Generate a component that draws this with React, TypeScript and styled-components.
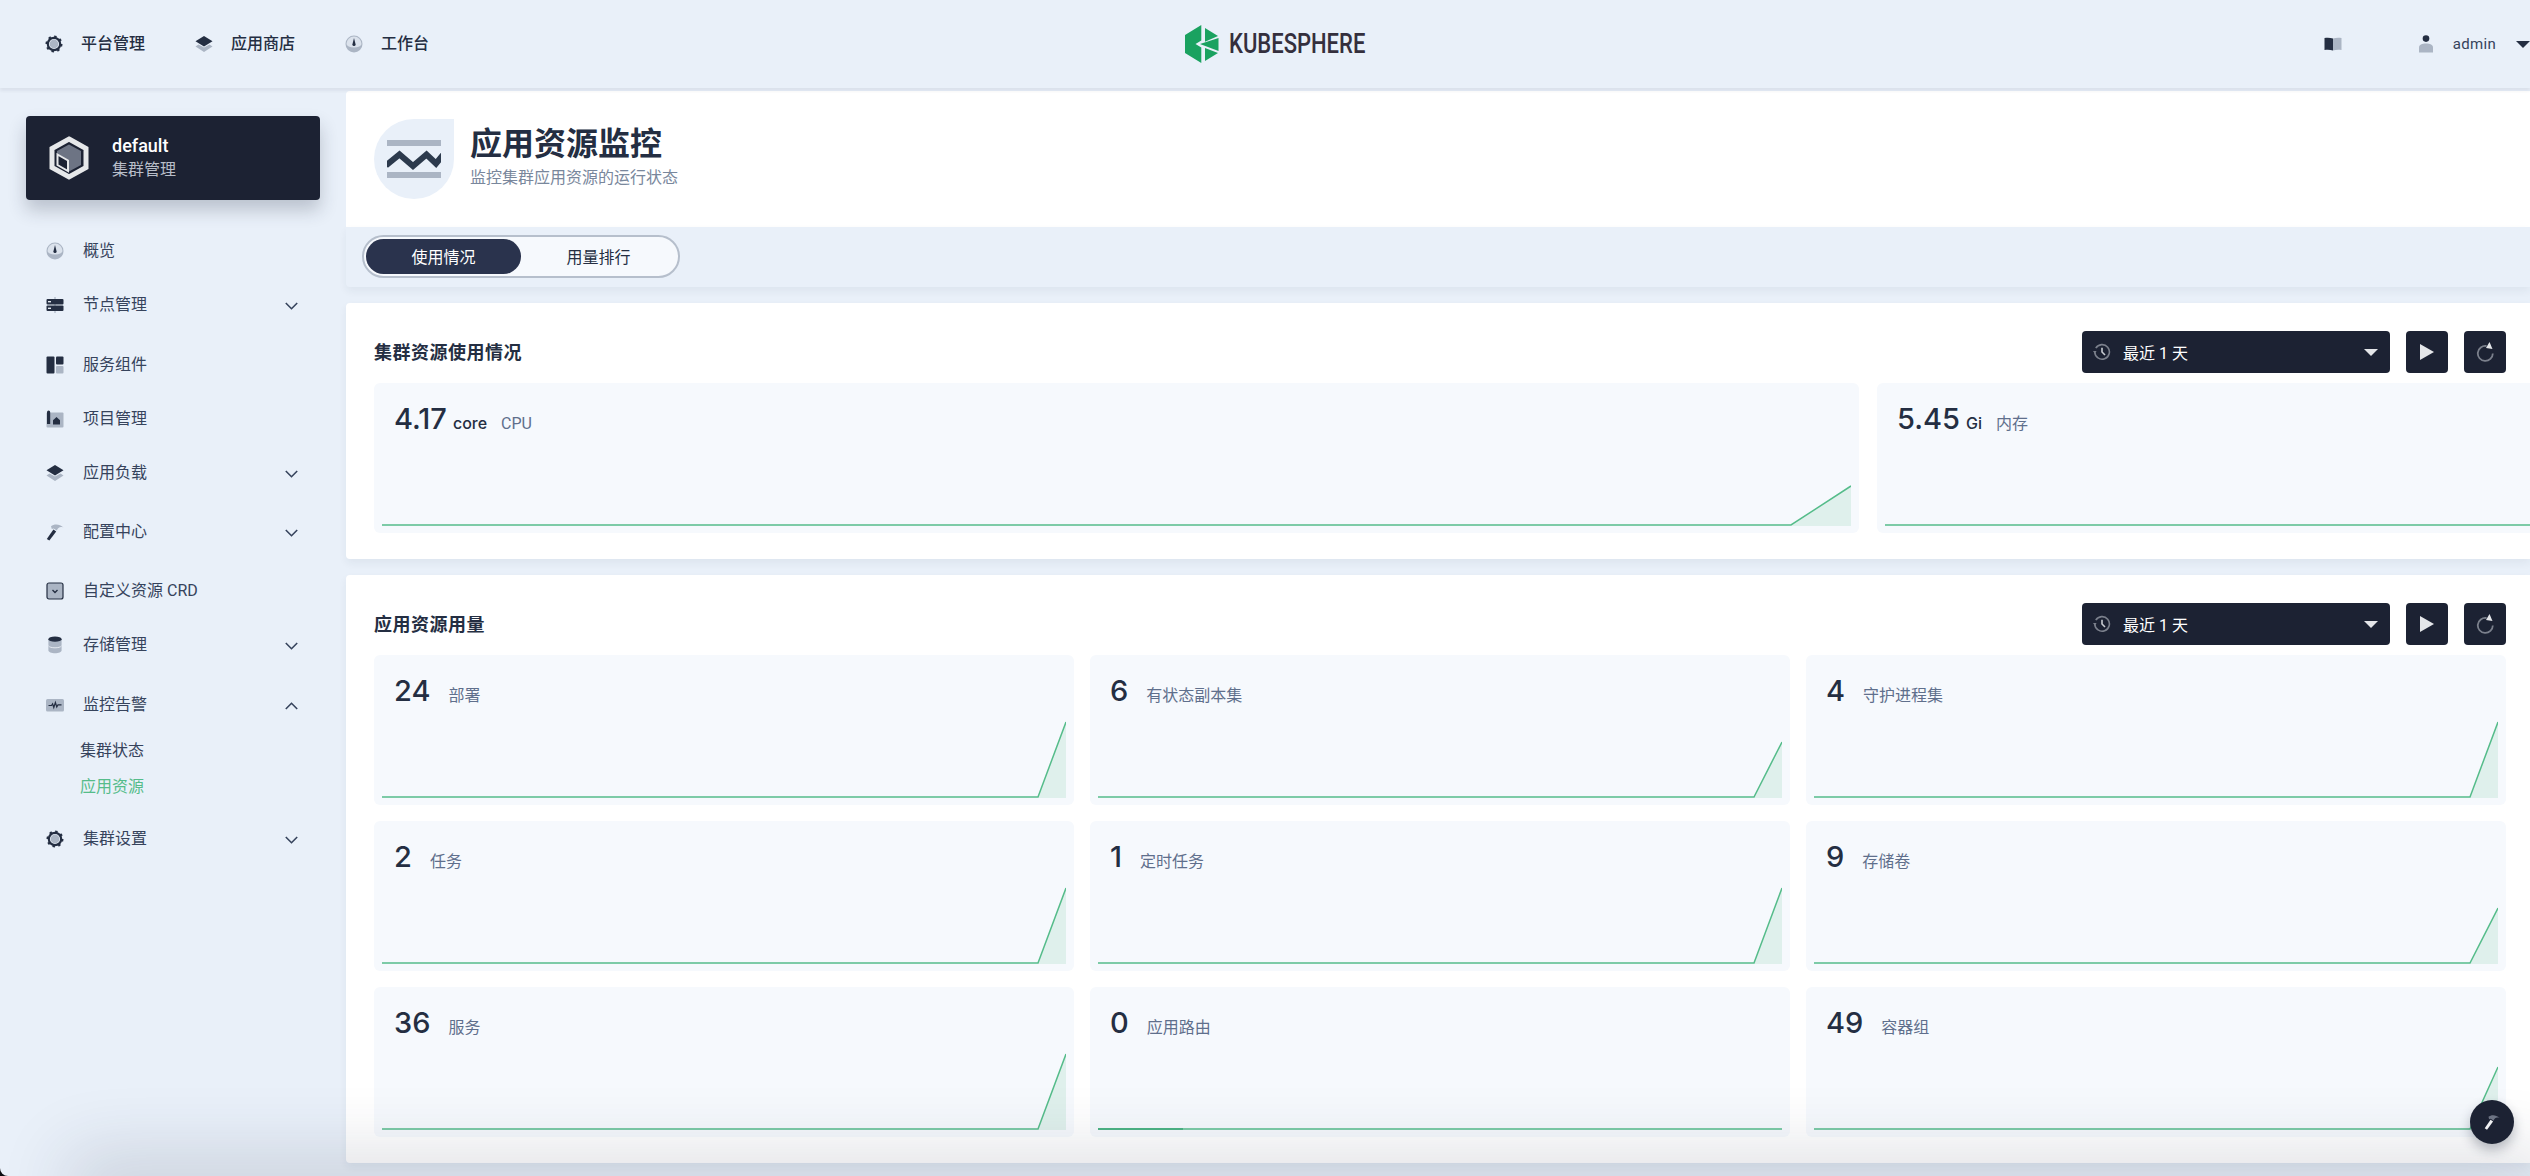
import React, { FC } from "react";
import styled, { createGlobalStyle } from "styled-components";

const DARK = "#1c2233";
const INK = "#242e42";
const SLATE = "#36435c";
const LIGHT = "#abb5c4";
const PAGE = "#e9f0f9";
const CARD = "#f6f9fd";
const GREEN = "#55bc8a";

const GlobalStyle = createGlobalStyle`
  html, body {
    margin: 0;
    padding: 0;
    background: #0b0d12;
    overflow: hidden;
  }
  * { box-sizing: border-box; }
`;

type IconProps = { size?: number };

const GaugeIcon: FC<IconProps> = ({ size = 18 }) => (
  <svg width={size} height={size} viewBox="0 0 18 18">
    <circle cx="9" cy="9" r="8.5" fill={LIGHT} />
    <path d="M1.500 9a7.500 7.500 0 0 1 15 0 7.500 3.500 0 0 1-15 0z" fill="#dbe2ec" />
    <path d="M9 3 10.600 9.500a1.600 1.600 0 1 1-3.200 0z" fill={INK} />
  </svg>
);

const GearIcon: FC<IconProps> = ({ size = 18 }) => (
  <svg width={size} height={size} viewBox="0 0 18 18">
    <circle cx="9" cy="9" r="6.200" fill="none" stroke={INK} strokeWidth="2.200" />
    <circle cx="9" cy="9" r="4.400" fill={LIGHT} />
    <circle cx="9" cy="9" r="7.400" fill="none" stroke={INK} strokeWidth="2.200" strokeDasharray="2.400 3.400" />
  </svg>
);

const LayersIcon: FC<IconProps> = ({ size = 18 }) => (
  <svg width={size} height={size} viewBox="0 0 18 18">
    <path d="M0.500 11.500 3.500 9.500 9 12.600 14.500 9.500 17.500 11.500 9 17z" fill={LIGHT} />
    <path d="M9 1 17.500 6.200 9 11.400 0.500 6.200z" fill={INK} />
  </svg>
);

const NodesIcon: FC<IconProps> = ({ size = 18 }) => (
  <svg width={size} height={size} viewBox="0 0 18 18">
    <rect x="8.400" y="1" width="1.200" height="16" fill={LIGHT} />
    <rect x="0.500" y="3" width="17" height="5.400" rx="1" fill={INK} />
    <rect x="0.500" y="9.600" width="17" height="5.400" rx="1" fill={INK} />
    <rect x="2" y="5" width="3" height="1.400" fill="#e4e9f0" />
    <rect x="2" y="11.600" width="3" height="1.400" fill="#e4e9f0" />
  </svg>
);

const ComponentsIcon: FC<IconProps> = ({ size = 18 }) => (
  <svg width={size} height={size} viewBox="0 0 18 18">
    <rect x="0.500" y="0.500" width="8" height="17" rx="1" fill={INK} />
    <rect x="10" y="0.500" width="7.500" height="8" rx="1" fill={INK} />
    <rect x="10" y="10" width="7.500" height="7.500" rx="1" fill={LIGHT} />
  </svg>
);

const ProjectIcon: FC<IconProps> = ({ size = 18 }) => (
  <svg width={size} height={size} viewBox="0 0 18 18">
    <rect x="0.500" y="2.500" width="17" height="15" rx="1" fill={LIGHT} />
    <path d="M1 2.200a1.600 1.600 0 0 1 3.200 0V14H1z" fill={INK} />
    <path d="M7 10.200 10.500 7 14 10.200V14.500H7z" fill={INK} />
  </svg>
);

const HammerIcon: FC<IconProps & { head?: string; handle?: string }> = ({
  size = 18,
  head = LIGHT,
  handle = INK,
}) => (
  <svg width={size} height={size} viewBox="0 0 18 18">
    <path d="M5 3.200C8 .8 13.500 .6 17.500 4.500 14 3.400 12 4.400 10.800 7.600L7.600 5.400 5.800 6z" fill={head} />
    <path d="M7.400 6.400 10.200 8.400 3.400 17.600 .8 16z" fill={handle} />
  </svg>
);

const CrdIcon: FC<IconProps> = ({ size = 18 }) => (
  <svg width={size} height={size} viewBox="0 0 18 18">
    <rect x="1" y="1" width="16" height="16" rx="2" fill={LIGHT} stroke={INK} strokeWidth="1.200" />
    <path d="M6.500 8 9 10.500 11.500 8" fill="none" stroke={INK} strokeWidth="1.400" />
  </svg>
);

const DatabaseIcon: FC<IconProps> = ({ size = 18 }) => (
  <svg width={size} height={size} viewBox="0 0 18 18">
    <path d="M2.400 3.500v11c0 1.600 3 2.800 6.600 2.800s6.600-1.200 6.600-2.800v-11z" fill={LIGHT} />
    <ellipse cx="9" cy="3.200" rx="6.600" ry="2.600" fill={INK} />
    <path d="M2.400 9.800c1 1.400 3.600 2 6.600 2s5.600-.6 6.600-2" fill="none" stroke="#e4e9f0" strokeWidth="1" />
  </svg>
);

const MonitorIcon: FC<IconProps> = ({ size = 18 }) => (
  <svg width={size} height={size} viewBox="0 0 18 18">
    <rect x="0" y="3" width="18" height="12.500" rx="1.500" fill={LIGHT} />
    <path d="M2.500 9.500H5.500L6.600 7.800 7.800 11.500 9.400 6.500 10.800 11 12 8.800H15.500" fill="none" stroke={INK} strokeWidth="1.200" />
  </svg>
);

const BookIcon: FC = () => (
  <svg width="18" height="14" viewBox="0 0 18 14">
    <path d="M0.500 1C3.500 0.500 6.500 0.700 9 1.500V13.500C6.500 12.700 3.500 12.500 0.500 13z" fill={INK} />
    <path d="M9 1.500C11.500 0.700 14.500 0.500 17.500 1V13C14.500 12.500 11.500 12.700 9 13.500z" fill={LIGHT} />
  </svg>
);

const UserIcon: FC = () => (
  <svg width="14" height="18" viewBox="0 0 14 18">
    <circle cx="7" cy="3.600" r="3.300" fill={INK} />
    <path d="M0 17.500V12.500C0 9.800 3 8.500 7 8.500S14 9.800 14 12.500V17.500z" fill={LIGHT} />
  </svg>
);

const HexLogo: FC = () => (
  <svg width="34" height="38" viewBox="0 0 34 38">
    <path d="M0 10 16.300 0V15.500L10.500 19 16.300 22.500V38L0 28z" fill="#1aa260" />
    <path d="M20 3 33 11 20 16.800z" fill="#1aa260" />
    <path d="M15 19 33.500 13V26z" fill="#1aa260" />
    <path d="M20 23 33 28 20 36z" fill="#1aa260" />
  </svg>
);

const ClusterIcon: FC = () => (
  <svg width="42" height="44" viewBox="0 0 42 44">
    <path d="M21 3 38 12.500V31.500L21 41 4 31.500V12.500z" fill="none" stroke="#e6e8ea" strokeWidth="5" />
    <path d="M21 8.500 33 15V29L21 35.500 9 29V15z" fill="#6d7484" />
    <path d="M9.500 18.500 20 24.500V35L9.500 29z" fill={DARK} stroke="#e6e8ea" strokeWidth="2" />
  </svg>
);

const HeadIconArt: FC = () => (
  <svg width="54" height="38" viewBox="0 0 54 38">
    <rect width="54" height="6" fill={LIGHT} />
    <rect y="32" width="54" height="6" fill={LIGHT} />
    <path d="M-1 25.500 12.500 14.500 26 26 39.500 14.500 49 23.500 56 15" fill="none" stroke="#2c3a4d" strokeWidth="6" />
  </svg>
);

const HistoryIcon: FC = () => (
  <svg width="18" height="18" viewBox="0 0 18 18">
    <path d="M2.800 5.200A7.300 7.300 0 1 1 1.800 9" fill="none" stroke="#7b808c" strokeWidth="1.600" />
    <path d="M0 8 3.600 8 1.800 10.600z" fill="#7b808c" />
    <path d="M9 4.800V9L12 12" fill="none" stroke="#c9cdd3" strokeWidth="1.600" />
  </svg>
);

const RefreshIcon: FC = () => (
  <svg width="18" height="20" viewBox="0 0 18 20">
    <path d="M10.500 4A7.500 7.500 0 1 0 16.800 11.500" fill="none" stroke="#7b808c" strokeWidth="1.800" />
    <path d="M13.500 0 16.500 7 10 6z" fill="#e4e6e9" />
  </svg>
);

const Chevron: FC<{ up?: boolean }> = ({ up }) => (
  <svg width="13" height="8" viewBox="0 0 13 8">
    <path d={up ? "M.8 7 6.500 1.300 12.200 7" : "M.8 1 6.500 6.700 12.200 1"} fill="none" stroke={SLATE} strokeWidth="1.600" />
  </svg>
);

interface SparkProps {
  width: number;
  start?: number;
  rise?: number;
}

const Sparkline: FC<SparkProps> = ({ width, start, rise }) => {
  const base = 84;
  if (start === undefined || rise === undefined) {
    return (
      <ChartSvg width={width} height={86} viewBox={`0 0 ${width} 86`}>
        <line x1="0" x2={width} y1={base} y2={base} stroke={GREEN} strokeWidth="1.500" />
        <line x1="0" x2="85" y1={base} y2={base} stroke="#3cab78" strokeWidth="1.500" />
      </ChartSvg>
    );
  }
  const line = `0,${base} ${start},${base} ${width},${base - rise}`;
  return (
    <ChartSvg width={width} height={86} viewBox={`0 0 ${width} 86`}>
      <polygon points={`${start},${base + 1} ${width},${base - rise} ${width},${base + 1}`} fill="rgba(85,188,138,0.14)" />
      <polyline points={line} fill="none" stroke={GREEN} strokeWidth="1.500" />
    </ChartSvg>
  );
};

const navItems = [
  { label: "平台管理", icon: <GearIcon />, width: 150 },
  { label: "应用商店", icon: <LayersIcon />, width: 150 },
  { label: "工作台", icon: <GaugeIcon />, width: 100 },
];

const menu = [
  { label: "概览", icon: <GaugeIcon />, h: 54 },
  { label: "节点管理", icon: <NodesIcon />, h: 60, more: true },
  { label: "服务组件", icon: <ComponentsIcon />, h: 54 },
  { label: "项目管理", icon: <ProjectIcon />, h: 54 },
  { label: "应用负载", icon: <LayersIcon />, h: 59, more: true },
  { label: "配置中心", icon: <HammerIcon />, h: 59, more: true },
  { label: "自定义资源 CRD", icon: <CrdIcon />, h: 54 },
  { label: "存储管理", icon: <DatabaseIcon />, h: 60, more: true },
  { label: "监控告警", icon: <MonitorIcon />, h: 46, more: true, open: true },
];

const usage = [
  { value: "24", label: "部署", rise: 75 },
  { value: "6", label: "有状态副本集", rise: 55 },
  { value: "4", label: "守护进程集", rise: 75 },
  { value: "2", label: "任务", rise: 75 },
  { value: "1", label: "定时任务", rise: 75 },
  { value: "9", label: "存储卷", rise: 55 },
  { value: "36", label: "服务", rise: 75 },
  { value: "0", label: "应用路由" },
  { value: "49", label: "容器组", rise: 62 },
];

const TimeControls: FC = () => (
  <Controls>
    <TimeSelect>
      <HistoryIcon />
      <TimeText>最近 1 天</TimeText>
      <Caret $color="#e4e6e9" />
    </TimeSelect>
    <SquareButton>
      <PlayShape />
    </SquareButton>
    <SquareButton>
      <RefreshIcon />
    </SquareButton>
  </Controls>
);

const App: FC = () => (
  <Page>
    <GlobalStyle />
    <Header>
      <TopNav>
        {navItems.map((item) => (
          <TopNavItem key={item.label} $width={item.width}>
            {item.icon}
            <span>{item.label}</span>
          </TopNavItem>
        ))}
      </TopNav>
      <Logo>
        <HexLogo />
        <LogoText>KUBESPHERE</LogoText>
      </Logo>
      <UserArea>
        <BookIcon />
        <UserName>
          <UserIcon />
          <span>admin</span>
        </UserName>
        <Caret $color={INK} />
      </UserArea>
    </Header>

    <Body>
      <Sidebar>
        <ClusterCard>
          <ClusterIcon />
          <div>
            <ClusterName>default</ClusterName>
            <ClusterSub>集群管理</ClusterSub>
          </div>
        </ClusterCard>
        <Menu>
          {menu.map((item) => (
            <MenuRow key={item.label} $h={item.h}>
              <MenuIcon>{item.icon}</MenuIcon>
              <MenuLabel>{item.label}</MenuLabel>
              {item.more && <Chevron up={item.open} />}
            </MenuRow>
          ))}
          <SubRow $h={36}>集群状态</SubRow>
          <SubRow $h={52} $active>
            应用资源
          </SubRow>
          <MenuRow $h={40}>
            <MenuIcon>
              <GearIcon />
            </MenuIcon>
            <MenuLabel>集群设置</MenuLabel>
            <Chevron />
          </MenuRow>
        </Menu>
      </Sidebar>

      <Main>
        <PageHead>
          <HeadIcon>
            <HeadIconArt />
          </HeadIcon>
          <HeadText>
            <PageTitle>应用资源监控</PageTitle>
            <PageDesc>监控集群应用资源的运行状态</PageDesc>
          </HeadText>
        </PageHead>

        <TabBar>
          <Tabs>
            <Tab $active>使用情况</Tab>
            <Tab>用量排行</Tab>
          </Tabs>
        </TabBar>

        <Panel>
          <PanelHead>
            <PanelTitle>集群资源使用情况</PanelTitle>
            <TimeControls />
          </PanelHead>
          <WideCards>
            <MetricCard>
              <MetricHead>
                <MetricValue>4.17</MetricValue>
                <MetricUnit>core</MetricUnit>
                <MetricLabel>CPU</MetricLabel>
              </MetricHead>
              <Sparkline width={1469} start={1409} rise={39} />
            </MetricCard>
            <MetricCard>
              <MetricHead>
                <MetricValue>5.45</MetricValue>
                <MetricUnit>Gi</MetricUnit>
                <MetricLabel>内存</MetricLabel>
              </MetricHead>
              <Sparkline width={1469} start={1409} rise={39} />
            </MetricCard>
          </WideCards>
        </Panel>

        <Panel>
          <PanelHead>
            <PanelTitle>应用资源用量</PanelTitle>
            <TimeControls />
          </PanelHead>
          <UsageGrid>
            {usage.map((item) => (
              <MetricCard key={item.label}>
                <MetricHead>
                  <MetricValue>{item.value}</MetricValue>
                  <MetricLabel $wide>{item.label}</MetricLabel>
                </MetricHead>
                <Sparkline width={684} start={item.rise ? 656 : undefined} rise={item.rise} />
              </MetricCard>
            ))}
          </UsageGrid>
        </Panel>
      </Main>
    </Body>

    <BottomShade />
    <Fab>
      <HammerIcon size={16} head="#6d7484" handle="#f0f1f3" />
    </Fab>
  </Page>
);

const Page = styled.div`
  position: relative;
  width: 100vw;
  height: 100vh;
  overflow: hidden;
  background: ${PAGE};
  border-bottom-left-radius: 8px;
  color: ${INK};
  font-family: Roboto, "Noto Sans CJK SC", sans-serif;
  font-size: 16px;
`;

const Header = styled.header`
  position: relative;
  z-index: 2;
  display: grid;
  grid-template-columns: 1185px auto 1fr;
  align-items: center;
  height: 88px;
  background: ${PAGE};
  box-shadow: 0 3px 3px rgba(36, 46, 66, 0.07);
`;

const TopNav = styled.nav`
  display: flex;
  padding-left: 45px;
`;

const TopNavItem = styled.div<{ $width: number }>`
  display: flex;
  align-items: center;
  gap: 18px;
  width: ${(p) => p.$width}px;
  font-weight: 500;
  line-height: 24px;
`;

const Logo = styled.div`
  display: flex;
  align-items: center;
  gap: 10px;
`;

const LogoText = styled.span`
  display: inline-block;
  width: 136px;
  font-family: Roboto, sans-serif;
  font-size: 27px;
  font-weight: 500;
  line-height: 30px;
  color: #342f3d;
  transform: scaleX(0.815);
  transform-origin: left center;
  white-space: nowrap;
`;

const UserArea = styled.div`
  display: flex;
  align-items: center;
  justify-content: flex-end;
`;

const UserName = styled.div`
  display: flex;
  align-items: center;
  gap: 20px;
  margin-left: 77px;
  margin-right: 20px;
  font-size: 15px;
  color: ${SLATE};
  letter-spacing: 0.3px;
`;

const Caret = styled.i<{ $color: string }>`
  display: block;
  width: 0;
  height: 0;
  border-left: 7px solid transparent;
  border-right: 7px solid transparent;
  border-top: 7px solid ${(p) => p.$color};
`;

const Body = styled.div`
  display: flex;
  height: calc(100% - 88px);
`;

const Sidebar = styled.aside`
  flex: 0 0 346px;
  padding: 28px 26px 0;
`;

const ClusterCard = styled.div`
  display: flex;
  align-items: center;
  gap: 22px;
  width: 294px;
  height: 84px;
  padding-left: 22px;
  background: ${DARK};
  border-radius: 4px;
  box-shadow: 0 10px 18px rgba(36, 46, 66, 0.24);
`;

const ClusterName = styled.div`
  font-size: 18px;
  font-weight: 500;
  line-height: 24px;
  color: #fff;
`;

const ClusterSub = styled.div`
  font-size: 16px;
  line-height: 24px;
  color: #b8bec9;
`;

const Menu = styled.div`
  margin-top: 41px;
`;

const MenuRow = styled.div<{ $h: number }>`
  display: flex;
  align-items: flex-start;
  height: ${(p) => p.$h}px;
  padding-right: 22px;
  svg:last-child:not(:only-child) {
    margin-top: 7px;
  }
`;

const MenuIcon = styled.span`
  display: flex;
  flex: 0 0 37px;
  height: 20px;
  padding-left: 20px;
  align-items: center;
`;

const MenuLabel = styled.span`
  flex: 1;
  padding-left: 19px;
  font-size: 16px;
  line-height: 20px;
  color: ${SLATE};
  white-space: nowrap;
`;

const SubRow = styled.div<{ $h: number; $active?: boolean }>`
  height: ${(p) => p.$h}px;
  padding-left: 54px;
  font-size: 16px;
  line-height: 20px;
  color: ${(p) => (p.$active ? GREEN : SLATE)};
`;

const Main = styled.main`
  flex: 1;
  min-width: 0;
  height: 1072px;
  margin-top: 3px;
`;

const PageHead = styled.div`
  display: flex;
  align-items: center;
  gap: 16px;
  height: 136px;
  padding-left: 28px;
  background: #fff;
  border-top-left-radius: 4px;
`;

const HeadText = styled.div`
  margin-top: -6px;
`;

const HeadIcon = styled.div`
  display: flex;
  align-items: center;
  justify-content: center;
  width: 80px;
  height: 80px;
  background: ${PAGE};
  border-radius: 50% 0 50% 50%;
`;

const PageTitle = styled.h1`
  margin: 0;
  font-size: 32px;
  font-weight: 700;
  line-height: 44px;
  color: ${INK};
`;

const PageDesc = styled.p`
  margin: 0;
  font-size: 16px;
  line-height: 24px;
  color: #79879c;
`;

const TabBar = styled.div`
  height: 60px;
  padding: 8px 0 0 16px;
  background: ${PAGE};
  border-bottom-left-radius: 4px;
  box-shadow: 0 4px 8px rgba(36, 46, 66, 0.06);
`;

const Tabs = styled.div`
  display: flex;
  width: 318px;
  height: 43px;
  padding: 2px;
  background: ${CARD};
  border: 2px solid #b6bfcc;
  border-radius: 22px;
`;

const Tab = styled.div<{ $active?: boolean }>`
  flex: 1;
  text-align: center;
  font-size: 16px;
  line-height: 37px;
  border-radius: 19px;
  color: ${(p) => (p.$active ? "#fff" : INK)};
  background: ${(p) => (p.$active ? "#2a334d" : "transparent")};
`;

const Panel = styled.section`
  margin-top: 16px;
  padding: 28px 24px 26px 28px;
  background: #fff;
  border-radius: 4px 0 0 4px;
  overflow: hidden;
  box-shadow: 0 4px 8px rgba(36, 46, 66, 0.06);
`;

const PanelHead = styled.div`
  display: flex;
  align-items: center;
  justify-content: space-between;
  height: 42px;
  margin-bottom: 10px;
`;

const PanelTitle = styled.h2`
  margin: -2px 0 0;
  font-size: 18px;
  font-weight: 700;
  letter-spacing: 0.5px;
  color: ${INK};
`;

const Controls = styled.div`
  display: flex;
  gap: 16px;
`;

const TimeSelect = styled.div`
  display: flex;
  align-items: center;
  width: 308px;
  height: 42px;
  padding: 0 12px 0 11px;
  background: ${DARK};
  border-radius: 4px;
`;

const TimeText = styled.span`
  flex: 1;
  padding-left: 12px;
  font-size: 16px;
  color: #fff;
`;

const SquareButton = styled.div`
  display: flex;
  align-items: center;
  justify-content: center;
  width: 42px;
  height: 42px;
  background: ${DARK};
  border-radius: 4px;
`;

const PlayShape = styled.i`
  display: block;
  width: 0;
  height: 0;
  border-left: 14px solid #e4e6e9;
  border-top: 8px solid transparent;
  border-bottom: 8px solid transparent;
`;

const WideCards = styled.div`
  display: grid;
  grid-template-columns: 1485px 1485px;
  gap: 18px;
`;

const UsageGrid = styled.div`
  display: grid;
  grid-template-columns: repeat(3, 1fr);
  gap: 16px;
`;

const MetricCard = styled.div`
  display: flex;
  flex-direction: column;
  justify-content: space-between;
  height: 150px;
  padding: 0 8px 6px;
  background: ${CARD};
  border-radius: 6px;
`;

const MetricHead = styled.div`
  display: flex;
  align-items: baseline;
  padding: 18px 0 0 12px;
`;

const MetricValue = styled.span`
  font-family: Inter, Roboto, sans-serif;
  font-size: 29px;
  font-weight: 500;
  line-height: 36px;
  color: ${INK};
`;

const MetricUnit = styled.span`
  margin-left: 6px;
  font-family: Inter, Roboto, sans-serif;
  font-size: 16px;
  font-weight: 500;
  color: ${INK};
`;

const MetricLabel = styled.span<{ $wide?: boolean }>`
  margin-left: ${(p) => (p.$wide ? 18 : 14)}px;
  font-size: 16px;
  color: #5f6f8c;
`;

const ChartSvg = styled.svg`
  display: block;
  flex: none;
`;

const BottomShade = styled.div`
  position: absolute;
  left: 90px;
  right: 0;
  bottom: -24px;
  height: 24px;
  pointer-events: none;
  box-shadow: 0 0 70px 22px rgba(36, 46, 66, 0.16);
`;

const Fab = styled.div`
  position: absolute;
  left: 2470px;
  top: 1100px;
  display: flex;
  align-items: center;
  justify-content: center;
  width: 44px;
  height: 44px;
  background: ${DARK};
  border-radius: 50%;
  box-shadow: 0 6px 12px rgba(36, 46, 66, 0.3);
`;

export default App;
